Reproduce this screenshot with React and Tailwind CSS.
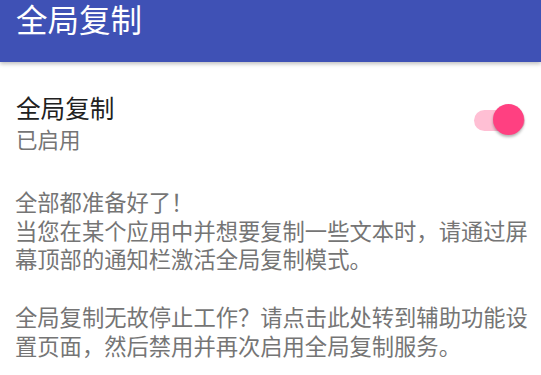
import React from "react";

export default function App() {
  const font = { fontFamily: '"Noto Sans CJK SC", "Noto Sans", sans-serif' };
  return (
    <div className="w-[541px] h-[375px] bg-white overflow-hidden" style={font}>
      <header className="relative z-10 h-[62px] bg-[#3f51b5] pl-[16px] shadow-[0_2px_4px_rgba(0,0,0,0.25)]">
        <h1 className="text-[31.5px] leading-[36px] text-white font-normal">全局复制</h1>
      </header>
      <div className="flex items-start pt-[30px] pl-[16px] pr-[16px]">
        <div className="flex-1 flex flex-col">
          <div className="text-[24.6px] leading-[30px] text-[#212121]">全局复制</div>
          <div className="text-[21.5px] leading-[34px] text-[#757575]">已启用</div>
        </div>
        <div className="relative mt-[12px] w-[51px] h-[32px]">
          <div className="absolute left-0 top-[6px] w-[51px] h-[21px] rounded-full bg-[#ffbfd4]"></div>
          <div className="absolute right-[1px] top-0 w-[31px] h-[31px] rounded-full bg-[#ff4081] shadow-[0_2px_3px_rgba(0,0,0,0.3)]"></div>
        </div>
      </div>
      <div className="mt-[31px] pl-[15px] pr-[12.5px] text-[22.3px] leading-[28.7px] text-[#757575]">
        <p>
          全部都准备好了！
          <br />
          当您在某个应用中并想要复制一些文本时，请通过屏幕顶部的通知栏激活全局复制模式。
        </p>
        <p className="mt-[28.7px]">
          全局复制无故停止工作？请点击此处转到辅助功能设置页面，然后禁用并再次启用全局复制服务。
        </p>
      </div>
    </div>
  );
}
